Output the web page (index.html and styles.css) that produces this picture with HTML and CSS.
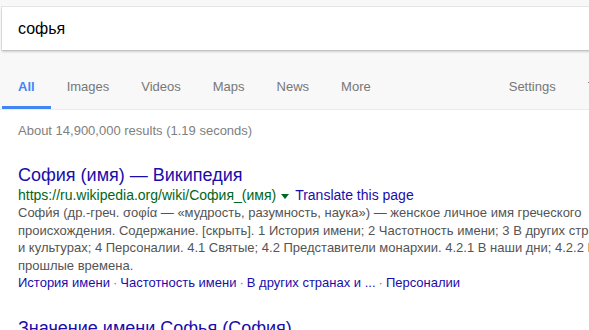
FILE: index.html
```html
<!DOCTYPE html>
<html lang="ru">
<head>
<meta charset="utf-8">
<link rel="stylesheet" href="styles.css">
</head>
<body>
<header class="header">
  <div class="searchbox"><span class="query">софья</span></div>
  <nav class="tabs">
    <div class="tab active">All</div>
    <div class="tab">Images</div>
    <div class="tab">Videos</div>
    <div class="tab">Maps</div>
    <div class="tab">News</div>
    <div class="tab">More</div>
    <div class="tab right">Settings</div>
    <div class="tab">Tools</div>
  </nav>
</header>
<main class="results">
  <div class="stats">About 14,900,000 results (1.19 seconds)</div>
  <div class="result">
    <a class="title">София (имя) — Википедия</a>
    <div class="urlline"><span class="url">https://ru.wikipedia.org/wiki/София_(имя)</span><span class="arrow"></span><a class="translate">Translate this page</a></div>
    <div class="snippet">Софи́я (др.-греч. σοφία — «мудрость, разумность, наука») — женское личное имя греческого<br>происхождения. Содержание. [скрыть]. 1 История имени; 2 Частотность имени; 3 В других странах<br>и культурах; 4 Персоналии. 4.1 Святые; 4.2 Представители монархии. 4.2.1 В наши дни; 4.2.2 В<br>прошлые времена.</div>
    <div class="sitelinks"><a>История имени</a><span class="dot">·</span><a>Частотность имени</a><span class="dot">·</span><a>В других странах и ...</a><span class="dot">·</span><a>Персоналии</a></div>
  </div>
  <div class="result">
    <a class="title">Значение имени Софья (София)</a>
  </div>
</main>
</body>
</html>
```
FILE: styles.css
```css
html, body {
  margin: 0;
  padding: 0;
  overflow: hidden;
  background: #fff;
  font-family: Arial, "Liberation Sans", sans-serif;
}
.header {
  background: #f8f8f8;
  border-bottom: 1px solid #ebebeb;
  padding-top: 7px;
}
.searchbox {
  margin-left: 2px;
  width: 700px;
  height: 43px;
  background: #fff;
  box-shadow: 0 2px 2px rgba(0,0,0,0.16), 0 0 0 1px rgba(0,0,0,0.08);
  display: flex;
  align-items: center;
  padding-left: 16px;
  box-sizing: border-box;
}
.query {
  font-size: 16px;
  color: #000;
}
.tabs {
  display: flex;
  margin-top: 26px;
  margin-left: 2px;
  width: 800px;
}
.tab {
  padding: 0 16px;
  font-size: 13px;
  color: #777;
  height: 33px;
  line-height: 22px;
  box-sizing: border-box;
  white-space: nowrap;
}
.tab.active {
  color: #4285f4;
  font-weight: bold;
  border-bottom: 3px solid #4285f4;
}
.tab.right {
  margin-left: 106px;
}
.results {
  padding-left: 18px;
}
.stats {
  font-size: 13px;
  color: #808080;
  padding-top: 13px;
  height: 26px;
}
.result {
  margin-top: 15px;
}
.title {
  display: block;
  font-size: 18px;
  color: #1a0dab;
  line-height: 22px;
}
.urlline {
  font-size: 14px;
  line-height: 18px;
  white-space: nowrap;
  display: flex;
  align-items: center;
}
.url { color: #006621; }
.arrow {
  width: 0; height: 0;
  border-left: 4px solid transparent;
  border-right: 4px solid transparent;
  border-top: 5px solid #006621;
  margin: 2px 6px 0 5px;
}
.translate { color: #1a0dab; }
.snippet {
  font-size: 13px;
  line-height: 17.5px;
  color: #545454;
  white-space: nowrap;
}
.sitelinks {
  font-size: 13px;
  line-height: 18px;
  white-space: nowrap;
}
.sitelinks a { color: #1a0dab; }
.dot {
  color: #808080;
  margin: 0 3px;
}
.result + .result {
  margin-top: 25px;
}
```
